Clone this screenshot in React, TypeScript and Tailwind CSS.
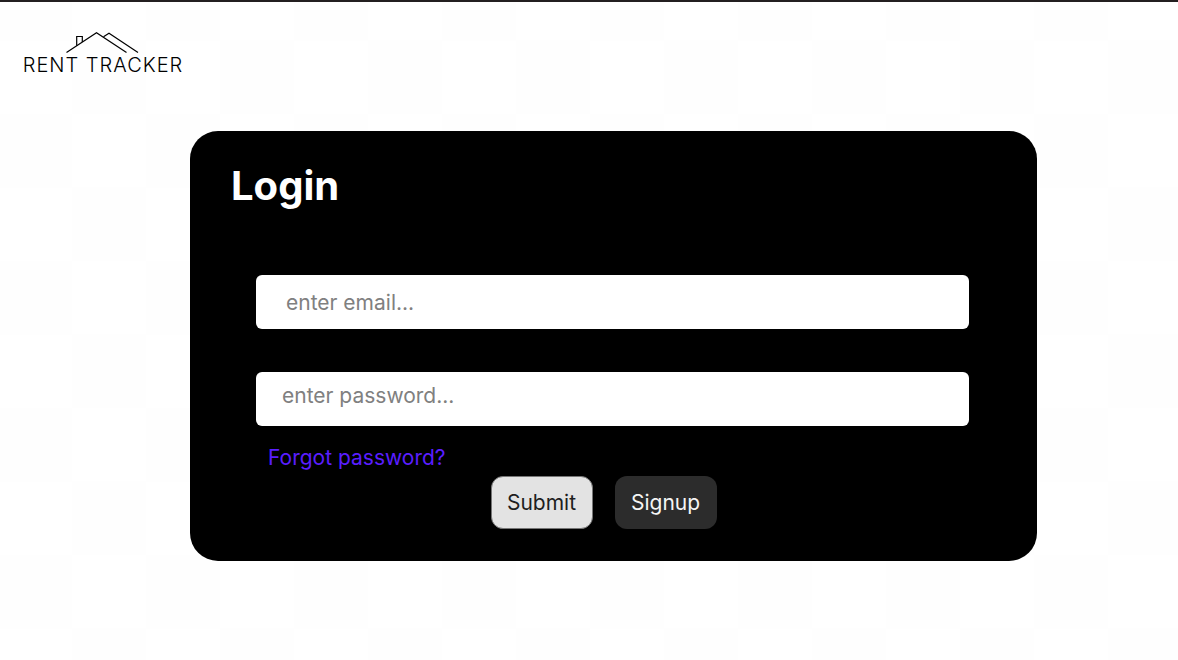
import React from "react";

function Logo() {
  return (
    <a
      href="#home"
      className="flex w-[166px] flex-col items-center text-black"
      aria-label="Rent Tracker"
    >
      <svg
        viewBox="0 0 76 24"
        className="h-6 w-[76px]"
        fill="none"
        stroke="currentColor"
        strokeWidth="1.2"
        aria-hidden="true"
      >
        <path d="M1.5 22.5 31.5 2.8 61.5 22.5" />
        <path d="M38.5 6.8 44 3.2 73 22.5" />
        <path d="M11.7 15.8V6.5H17.3V12" />
      </svg>
      <span className="text-xl leading-[22px] font-light tracking-wider whitespace-nowrap">
        RENT TRACKER
      </span>
    </a>
  );
}

export default function App() {
  return (
    <div className="flex min-h-screen flex-col border-t-2 border-[#231f20] bg-[repeating-conic-gradient(#fff_0_25%,#fefefe_0_50%)] bg-[length:148px_147px] bg-[position:-2px_-35px] font-[Inter,sans-serif]">
      <header className="flex h-[129px] shrink-0 px-5 pt-7">
        <Logo />
      </header>
      <main className="mr-[141px] ml-[190px] rounded-[28px] bg-black pt-[31px] pr-[68px] pb-8 pl-[66px]">
        <h1 className="-ml-[25px] text-[40px] leading-12 font-bold text-white">
          Login
        </h1>
        <form
          className="mt-[65px] flex flex-col"
          onSubmit={(event) => event.preventDefault()}
        >
          <input
            type="email"
            aria-label="Email"
            placeholder="enter email..."
            className="h-[54px] w-full rounded-md bg-white px-[30px] text-[21px] text-black placeholder:text-[#808080]"
          />
          <input
            type="password"
            aria-label="Password"
            placeholder="enter password..."
            className="mt-[43px] h-[54px] w-full rounded-md bg-white px-[26px] pb-2 text-[21px] text-black placeholder:text-[#808080]"
          />
          <a
            href="#forgot-password"
            className="mt-4 ml-3 self-start text-[21px] leading-8 text-[#5a1eff]"
          >
            Forgot password?
          </a>
          <div className="mt-0.5 mr-[18px] flex justify-center gap-[22px]">
            <button
              type="submit"
              className="h-[53px] w-[102px] rounded-xl border border-[#767676] bg-[#e3e3e3] text-[21px] text-[#1e1e1e]"
            >
              Submit
            </button>
            <button
              type="button"
              className="h-[53px] w-[102px] rounded-xl bg-[#2c2c2c] text-[21px] text-[#f5f5f5]"
            >
              Signup
            </button>
          </div>
        </form>
      </main>
    </div>
  );
}
